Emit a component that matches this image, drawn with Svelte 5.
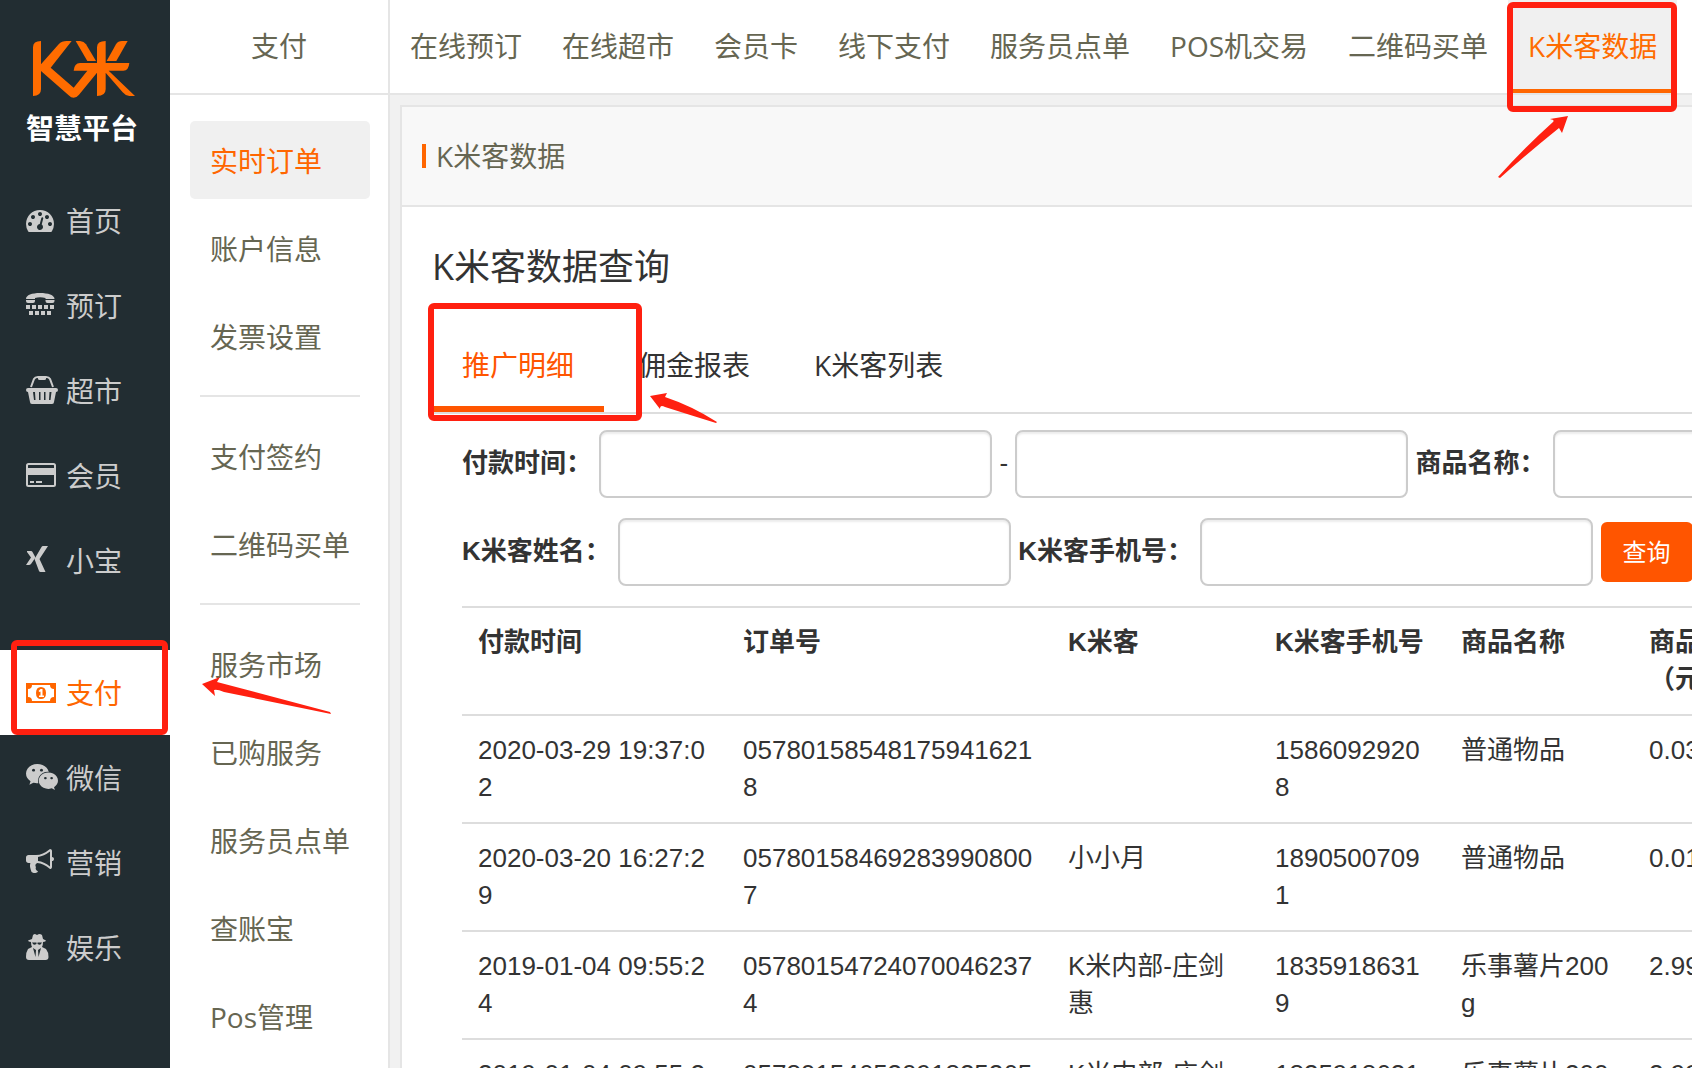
<script>
    const mainMenu = [
        { label: '首页', icon: 'dashboard' },
        { label: '预订', icon: 'tty' },
        { label: '超市', icon: 'basket' },
        { label: '会员', icon: 'card' },
        { label: '小宝', icon: 'xing' },
        { label: '支付', icon: 'money' },
        { label: '微信', icon: 'wechat' },
        { label: '营销', icon: 'bullhorn' },
        { label: '娱乐', icon: 'secret' }
    ];

    const subMenu = [
        ['实时订单', '账户信息', '发票设置'],
        ['支付签约', '二维码买单'],
        ['服务市场', '已购服务', '服务员点单', '查账宝', 'Pos管理']
    ];

    const topNav = ['在线预订', '在线超市', '会员卡', '线下支付', '服务员点单', 'POS机交易', '二维码买单', 'K米客数据'];
    const tabs = ['推广明细', '佣金报表', 'K米客列表'];
    const columns = ['付款时间', '订单号', 'K米客', 'K米客手机号', '商品名称', '商品价格（元）'];

    const rows = [
        ['2020-03-29 19:37:02', '057801585481759416218', '', '15860929208', '普通物品', '0.03'],
        ['2020-03-20 16:27:29', '057801584692839908007', '小小月', '18905007091', '普通物品', '0.01'],
        ['2019-01-04 09:55:24', '057801547240700462374', 'K米内部-庄剑惠', '18359186319', '乐事薯片200g', '2.99'],
        ['2019-01-04 09:55:24', '057801546530918252654', 'K米内部-庄剑惠', '18359186319', '乐事薯片200g', '2.99']
    ];

    let activeMain = $state('支付');
    let activeSub = $state('实时订单');
    let activeTop = $state('K米客数据');
    let activeTab = $state('推广明细');
</script>

<div class="app">
    <aside class="sidebar">
        <a class="logo" href="#home">
            <svg viewBox="90 120 324 180" width="108" height="60" fill="#ff6c00" aria-hidden="true">
                <path d="M99 288V142Q99 123 123 123V193L176 133Q185 123 200 123H215L152 203L221 263L262 212H221Q223 189 240 189H291V142Q291 123 317 123V189H388Q386 212 370 212H326L405 288H388Q376 287 368 277L317 218V268Q317 288 291 288V218L237 284Q222 302 206 286L123 213V268Q123 288 99 288Z" />
                <path d="M227 123H240Q252 124 258 133L288 183H262Z" />
                <path d="M383 123H366Q354 123 348 133L320 183H349Z" />
            </svg>
            <span>智慧平台</span>
        </a>
        <nav class="main-menu">
            {#each mainMenu as item}
                <a
                    href="#{item.icon}"
                    class:split={item.icon === 'money'}
                    class:active={activeMain === item.label}
                    onclick={() => (activeMain = item.label)}
                >
                    <svg viewBox="0 -1 32 30" width="32" height="30" fill="currentColor" aria-hidden="true">
                        {#if item.icon === 'dashboard'}
                            <path transform="translate(0 -1) scale(0.015625)" d="M384 1152q0-53-37.5-90.5t-90.5-37.5-90.5 37.5-37.5 90.5 37.5 90.5 90.5 37.5 90.5-37.5 37.5-90.5zm192-448q0-53-37.5-90.5t-90.5-37.5-90.5 37.5-37.5 90.5 37.5 90.5 90.5 37.5 90.5-37.5 37.5-90.5zm428 481l101-382q6-26-7.5-48.5t-38.5-29.5-48 6.5-30 39.5l-101 382q-60 5-107 43.5t-63 98.5q-20 77 20 146t117 89 146-20 89-117q16-60-6-117t-72-91zm660-33q0-53-37.5-90.5t-90.5-37.5-90.5 37.5-37.5 90.5 37.5 90.5 90.5 37.5 90.5-37.5 37.5-90.5zm-640-640q0-53-37.5-90.5t-90.5-37.5-90.5 37.5-37.5 90.5 37.5 90.5 90.5 37.5 90.5-37.5 37.5-90.5zm448 192q0-53-37.5-90.5t-90.5-37.5-90.5 37.5-37.5 90.5 37.5 90.5 90.5 37.5 90.5-37.5 37.5-90.5zm320 448q0 261-141 483-19 29-54 29h-1402q-35 0-54-29-141-221-141-483 0-182 71-348t191-286 286-191 348-71 348 71 286 191 191 286 71 348z" />
                        {:else if item.icon === 'tty'}
                            <path d="M0 7C0 3 6 1 14 1S28.500 3 28.500 7H19.500V6Q14 4.500 9 6V7Z" />
                            <path d="M0 8H9V9Q9 11 7 11H2Q0 11 0 9ZM19.500 8H28.500V9Q28.500 11 26.500 11H21.500Q19.500 11 19.500 9Z" />
                            <path d="M0 13h4v4H0zM6 13h4v4H6zM12 13h4v4h-4zM18 13h4v4h-4zM24 13h4v4h-4zM3 19h4v4H3zM9 19h4v4H9zM15 19h4v4h-4zM21 19h4v4h-4z" />
                        {:else if item.icon === 'basket'}
                            <path d="M5 10L8 2Q9 0 12 0H20Q23 0 24 2L27 10" fill="none" stroke="currentColor" stroke-width="2" />
                            <rect x="12" y="-1" width="8" height="4" rx="1.500" />
                            <path fill-rule="evenodd" d="M2 11H30Q32 11 32 13T30 15L28 25Q28 27 26 27H6Q4 27 4 25L2 15Q0 15 0 13T2 11ZM7 15L8 23H9.500L9 15ZM13 15V23H14.500V15ZM18 15V23H19.500V15ZM23.500 15L23 23H24.500L25.500 15Z" />
                        {:else if item.icon === 'card'}
                            <path fill-rule="evenodd" d="M2.500 1H27.500Q30 1 30 3.500V22.500Q30 25 27.500 25H2.500Q0 25 0 22.500V3.500Q0 1 2.500 1ZM2 6H28V3.500Q28 3 27.500 3H2.500Q2 3 2 3.500ZM2 13V22.500Q2 23 2.500 23H27.500Q28 23 28 22.500V13Z" />
                            <path d="M4 19h4v2H4zM10 19h6v2h-6z" />
                        {:else if item.icon === 'xing'}
                            <path d="M1 4H5Q6 4 6.500 5L9.500 10.500L5 17Q4 18 3 18H0L5 10.500L1 5Z" />
                            <path d="M17 -1H22L13.500 12L19.500 25H14.500Q13.500 25 13 24L8.500 12L15.500 0Q16 -1 17 -1Z" />
                        {:else if item.icon === 'money'}
                            <path fill-rule="evenodd" d="M0 4H30V24H0ZM2 10V18Q6 18 6 22H24Q24 18 28 18V10Q24 10 24 6H6Q6 10 2 10ZM15 8Q20 8 20 14T15 20T10 14T15 8ZM13 18H18V16.500H16.500V10H14.500L12.500 12L13.500 13L14.500 12.500V16.500H13Z" />
                        {:else if item.icon === 'wechat'}
                            <path transform="translate(0 -1) scale(0.015625)" d="M580 461q0-41-25-66t-66-25q-43 0-76 25.500t-33 65.500q0 39 33 64.500t76 25.500q41 0 66-24.500t25-65.500zm743 507q0-28-25.500-50t-65.500-22q-27 0-49.500 22.500t-22.500 49.500q0 28 22.500 50.500t49.500 22.500q40 0 65.500-22t25.500-51zm-236-507q0-41-24.500-66t-65.500-25q-43 0-76 25.500t-33 65.500q0 39 33 64.500t76 25.500q41 0 65.500-24.500t24.500-65.500zm635 507q0-28-26-50t-65-22q-27 0-49.500 22.500t-22.500 49.500q0 28 22.500 50.500t49.500 22.500q39 0 65-22t26-51zm-266-397q-31-4-70-4-169 0-311 77t-223.500 208.500-81.500 287.500q0 78 23 152-35 3-68 3-26 0-50-1.500t-55-6.500-44.500-7-54.500-10.500-50-10.500l-253 127 72-218q-290-203-290-490 0-169 97.500-311t264-223.500 363.500-81.500q176 0 332.500 66t262 182.500 136.500 260.500zm592 561q0 117-68.500 223.500t-185.500 193.500l55 181-199-109q-150 37-218 37-169 0-311-70.500t-223.500-191.500-81.500-264 81.500-264 223.500-191.500 311-70.500q161 0 303 70.500t227.500 192 85.500 263.500z" />
                        {:else if item.icon === 'bullhorn'}
                            <path transform="translate(0 -2) scale(0.015625)" d="M1664 640q53 0 90.500 37.500t37.500 90.500-37.500 90.500-90.500 37.500v384q0 52-38 90t-90 38q-417-347-812-380-58 19-91 66t-31 100.500 40 92.500q-20 33-23 65.500t6 58 33.500 55 48 50 61.500 50.500q-29 58-111.500 83t-168.500 11.500-132-55.500q-7-23-29.500-87.500t-32-94.500-23-89-15-101 3.500-98.500 22-110.500h-122q-66 0-113-47t-47-113v-192q0-66 47-113t113-47h480q435 0 896-384 52 0 90 38t38 90v384zm-128 604v-954q-394 302-768 343v270q377 42 768 341z" />
                        {:else}
                            <path d="M7 1Q8 0 9 0L11 1L13 0Q15 0 16 1L17 5L20 6.500Q20 7.500 17 8Q17 11 16 13L20 15Q22.500 18 22.500 23Q22.500 26 19.500 26H3Q0 26 0 23Q0 18 2 15L6 13Q5 11 5 8Q2 7.500 2 6.500L6 5Z" />
                            <path class="cut" d="M6 8.500H10.500V10Q8 11.500 7 10ZM11.500 8.500H16L15 10Q14 11.500 11.500 10ZM7 14L10 16L9.500 23ZM15 14L12 16L12.500 23Z" />
                        {/if}
                    </svg>
                    {item.label}
                </a>
            {/each}
        </nav>
    </aside>

    <aside class="subbar">
        <h2>支付</h2>
        <nav>
            {#each subMenu as group}
                <div class="group">
                    {#each group as item}
                        <a href="#sub" class:active={activeSub === item} onclick={() => (activeSub = item)}>{item}</a>
                    {/each}
                </div>
            {/each}
        </nav>
    </aside>

    <main>
        <nav class="topnav">
            {#each topNav as item}
                <a href="#top" class:active={activeTop === item} onclick={() => (activeTop = item)}>{item}</a>
            {/each}
        </nav>

        <section class="panel">
            <header><h3>K米客数据</h3></header>
            <div class="panel-body">
                <h1>K米客数据查询</h1>
                <div class="tabs">
                    {#each tabs as tab}
                        <button type="button" class:active={activeTab === tab} onclick={() => (activeTab = tab)}>{tab}</button>
                    {/each}
                </div>

                <div class="tab-content">
                    <form onsubmit={(e) => e.preventDefault()}>
                        <div class="form-row">
                            <label for="pay-from">付款时间：</label>
                            <input id="pay-from" type="text" />
                            -
                            <input id="pay-to" type="text" aria-label="付款时间" />
                            <label for="goods">商品名称：</label>
                            <input id="goods" type="text" />
                        </div>
                        <div class="form-row">
                            <label for="name">K米客姓名：</label>
                            <input id="name" type="text" />
                            <label for="phone">K米客手机号：</label>
                            <input id="phone" type="text" />
                            <button type="submit">查询</button>
                        </div>
                    </form>

                    <table>
                        <colgroup>
                            <col class="c-time" />
                            <col class="c-order" />
                            <col class="c-name" />
                            <col class="c-phone" />
                            <col class="c-goods" />
                            <col class="c-price" />
                        </colgroup>
                        <thead>
                            <tr>
                                {#each columns as column}
                                    <th>{column}</th>
                                {/each}
                            </tr>
                        </thead>
                        <tbody>
                            {#each rows as row}
                                <tr>
                                    {#each row as cell}
                                        <td>{cell}</td>
                                    {/each}
                                </tr>
                            {/each}
                        </tbody>
                    </table>
                </div>
            </div>
        </section>
    </main>

    <!-- guide marks drawn over the page -->
    <div class="mark mark-menu"></div>
    <div class="mark mark-tab"></div>
    <div class="mark mark-nav"></div>
    <svg class="arrow arrow-menu" viewBox="0 0 130 38" width="130" height="38" aria-hidden="true">
        <path d="M0 7L18 0L15 5L128 35L129 37L22 15Q15 12 12 13L13 19Z" />
    </svg>
    <svg class="arrow arrow-tab" viewBox="0 0 68 32" width="68" height="32" aria-hidden="true">
        <path d="M0 3L17 0L15 4Q42 13 67 29L66 30Q40 22 15 14Q10 11 10 16Z" />
    </svg>
    <svg class="arrow arrow-nav" viewBox="0 0 72 64" width="72" height="64" aria-hidden="true">
        <path d="M70 0L64 17L61 12Q30 37 2 62L0 61Q27 31 55 6Q57 4 52 3Z" />
    </svg>
</div>

<style>
    :global(body) {
        overflow: hidden;
    }

    .app {
        position: relative;
        display: flex;
        height: 100vh;
        overflow: hidden;
        background: #f1f1f1;
        color: #333;
        font-family: "Open Sans", "Noto Sans CJK SC", sans-serif;
        font-size: 28px;
        line-height: 40px;
    }

    a {
        color: inherit;
        text-decoration: none;
    }

    h1,
    h2,
    h3 {
        margin: 0;
        font-weight: 400;
    }

    .sidebar {
        flex: none;
        width: 170px;
        background: #222d32;
        color: #ccc;
    }

    .logo {
        display: flex;
        flex-direction: column;
        align-items: center;
        box-sizing: border-box;
        height: 178px;
        padding: 40px 12px 0 0;
        color: #fff;
        font-size: 28px;
        font-weight: 700;
        line-height: 56px;
    }

    .logo svg {
        margin-left: 10px;
    }

    .logo span {
        margin-left: 6px;
    }

    .main-menu a {
        display: flex;
        align-items: center;
        gap: 8px;
        box-sizing: border-box;
        height: 85px;
        padding: 1px 0 0 26px;
    }

    .main-menu a.split {
        margin-top: 47px;
    }

    .main-menu a.active {
        background: #fff;
        color: #ff6600;
    }

    .cut {
        fill: #222d32;
    }

    .subbar {
        flex: none;
        width: 218px;
        background: #fff;
        border-right: 2px solid #e5e5e5;
        color: #666652;
    }

    .subbar h2 {
        height: 93px;
        border-bottom: 2px solid #e5e5e5;
        font-size: 28px;
        line-height: 92px;
        text-align: center;
    }

    .subbar nav {
        padding: 26px 18px 0 20px;
    }

    .subbar nav a {
        display: block;
        height: 78px;
        margin-bottom: 10px;
        padding-left: 20px;
        border-radius: 5px;
        line-height: 80px;
    }

    .subbar nav a.active {
        background: #f0f0f0;
        color: #ff6600;
    }

    .group + .group::before {
        content: "";
        display: block;
        height: 2px;
        margin: 20px 10px;
        background: #e5e5e5;
    }

    .group {
        display: flow-root;
    }

    .group:not(:last-child) {
        margin-bottom: -10px;
    }

    main {
        flex: 1;
        min-width: 0;
        overflow: hidden;
    }

    .topnav {
        display: flex;
        height: 93px;
        background: #fff;
        border-bottom: 2px solid #e5e5e5;
        color: #666652;
        line-height: 92px;
        white-space: nowrap;
    }

    .topnav a {
        padding: 0 20px;
    }

    .topnav a.active {
        background: #f0f0f0;
        box-shadow: inset 0 -4px #ff6600;
        color: #ff6c00;
    }

    .panel {
        margin: 10px 0 0 10px;
        border: 2px solid #e5e5e5;
        border-right: 0;
        background: #fff;
    }

    .panel header {
        display: flex;
        align-items: center;
        height: 98px;
        padding-left: 20px;
        border-bottom: 2px solid #e5e5e5;
        background: #f8f8f8;
        color: #666652;
    }

    .panel h3 {
        display: flex;
        align-items: center;
        gap: 10px;
        font-size: 28px;
    }

    .panel h3::before {
        content: "";
        width: 4px;
        height: 24px;
        background: #ff6600;
    }

    .panel-body {
        padding: 32px 0 0 30px;
    }

    h1 {
        font-size: 36px;
        line-height: 56px;
    }

    .tabs {
        display: flex;
        gap: 4px;
        margin-top: 24px;
        border-bottom: 2px solid #ddd;
    }

    .tabs button {
        height: 93px;
        padding: 0 30px 2px;
        border: 0;
        background: none;
        color: inherit;
        font: inherit;
    }

    .tabs button.active {
        box-shadow: inset 0 -6px #ff5500;
        color: #ff5500;
    }

    .tab-content {
        padding: 16px 0 0 30px;
        font-family: "Liberation Sans", "Noto Sans CJK SC", sans-serif;
        font-size: 26px;
        line-height: 37px;
    }

    .form-row {
        height: 68px;
        margin-bottom: 20px;
        line-height: 66px;
        white-space: nowrap;
    }

    label {
        font-weight: 700;
    }

    input {
        box-sizing: border-box;
        width: 393px;
        height: 68px;
        border: 2px solid #ccc;
        border-radius: 8px;
        background: #fff;
        box-shadow: inset 0 2px 2px rgba(0, 0, 0, 0.08);
        font: inherit;
        vertical-align: top;
    }

    .form-row button {
        height: 60px;
        margin: 4px 0;
        padding: 0 22px 4px;
        border: 0;
        border-radius: 6px;
        background: #ff5500;
        color: #fff;
        font-family: inherit;
        font-size: 24px;
        vertical-align: top;
    }

    table {
        width: 1331px;
        table-layout: fixed;
        border-collapse: collapse;
    }

    th,
    td {
        padding: 16px;
        border-top: 2px solid #ddd;
        text-align: left;
        vertical-align: top;
        word-break: break-all;
    }

    .c-time {
        width: 265px;
    }

    .c-order {
        width: 325px;
    }

    .c-name {
        width: 207px;
    }

    .c-phone {
        width: 186px;
    }

    .c-goods {
        width: 188px;
    }

    .c-price {
        width: 160px;
    }

    .mark {
        position: absolute;
        box-sizing: border-box;
        border: 6px solid #ff2010;
        border-radius: 6px;
    }

    .mark-menu {
        left: 11px;
        top: 640px;
        width: 157px;
        height: 95px;
    }

    .mark-tab {
        left: 428px;
        top: 303px;
        width: 214px;
        height: 118px;
    }

    .mark-nav {
        left: 1507px;
        top: 2px;
        width: 170px;
        height: 110px;
    }

    .arrow {
        position: absolute;
        fill: #ff2010;
    }

    .arrow-menu {
        left: 202px;
        top: 677px;
    }

    .arrow-tab {
        left: 650px;
        top: 393px;
    }

    .arrow-nav {
        left: 1498px;
        top: 116px;
    }
</style>
